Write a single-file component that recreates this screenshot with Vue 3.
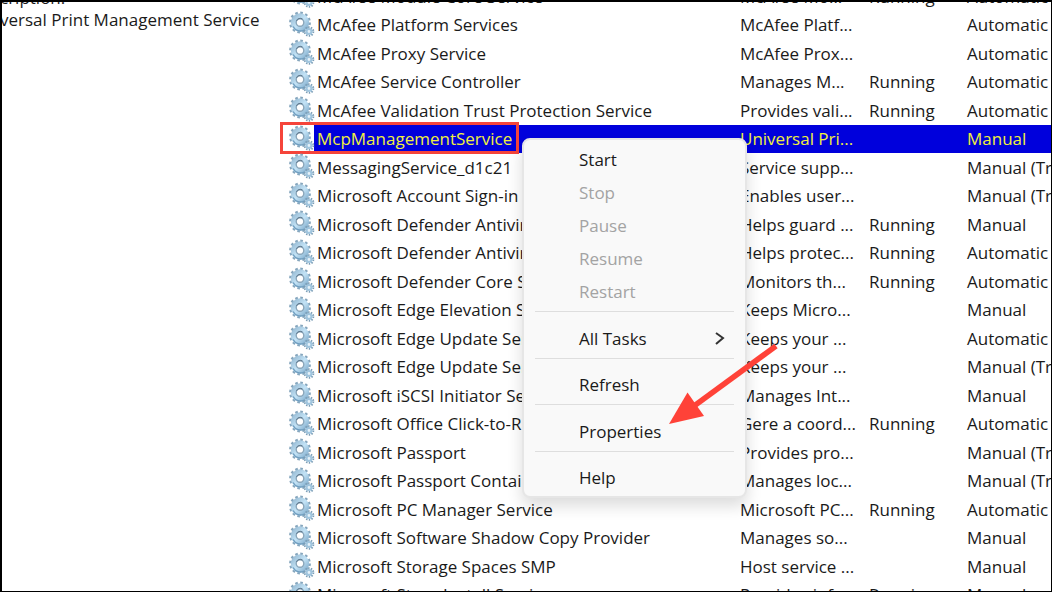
<template>
  <main class="window">
    <aside class="details">
      <p>cription:</p>
      <p>versal Print Management Service</p>
    </aside>

    <section class="services">
      <svg class="symbols" aria-hidden="true">
        <defs>
          <linearGradient id="steel" x1="0" y1="0" x2="1" y2="1">
            <stop offset="0" stop-color="#9dc0d8" />
            <stop offset="0.5" stop-color="#c3e3f6" />
            <stop offset="1" stop-color="#8ab4d2" />
          </linearGradient>
          <symbol id="gears" viewBox="0 0 26 26">
            <circle cx="11" cy="11.5" r="9.4" fill="none" stroke="#86a6bd" stroke-width="3" stroke-dasharray="2.5 2.42" />
            <circle cx="11" cy="11.5" r="6.3" fill="none" stroke="url(#steel)" stroke-width="5.8" />
            <path d="M4 15.5a8.5 8.5 0 0 0 11.5 3.5" fill="none" stroke="#6f9dbf" stroke-width="1.4" />
            <circle cx="11" cy="11.5" r="3.8" fill="#fff" stroke="#8aa6ba" stroke-width="1.4" />
            <path d="M7.5 10a4 4 0 0 1 6-2" fill="none" stroke="#5f788d" stroke-width="1" />
            <circle cx="20" cy="20.5" r="4.3" fill="none" stroke="#7b9db6" stroke-width="2" stroke-dasharray="1.4 1.3" />
            <circle cx="20" cy="20.5" r="2.5" fill="#e5f2fa" stroke="#a0c5de" stroke-width="2.2" />
          </symbol>
        </defs>
      </svg>

      <table>
        <colgroup>
          <col class="col-icon" />
          <col class="col-name" />
          <col class="col-description" />
          <col class="col-status" />
          <col />
        </colgroup>
        <tbody>
          <tr
            v-for="(service, index) in services"
            :key="index"
            :class="{ selected: index === selectedIndex }"
          >
            <td class="icon">
              <svg width="26" height="26" aria-hidden="true"><use href="#gears" /></svg>
              <span v-if="index === selectedIndex" class="marker"></span>
            </td>
            <td>{{ service[0] }}</td>
            <td>{{ service[1] }}</td>
            <td>{{ service[2] }}</td>
            <td>{{ service[3] }}</td>
          </tr>
        </tbody>
      </table>
    </section>

    <div class="menu" role="menu">
      <template v-for="(group, index) in menuGroups" :key="index">
        <hr v-if="index > 0" />
        <button
          v-for="item in group"
          :key="item.label"
          type="button"
          role="menuitem"
          :disabled="item.disabled"
        >
          {{ item.label }}
          <svg v-if="item.submenu" width="10" height="14" viewBox="0 0 10 14" aria-hidden="true">
            <path d="M1 1l7 5-7 6" fill="none" stroke="#333" stroke-width="2" />
          </svg>
        </button>
      </template>
    </div>

    <svg class="arrow" width="110" height="82" viewBox="0 0 110 82" aria-hidden="true">
      <path d="M108 2L26 62" stroke="#ff4238" stroke-width="5.5" />
      <path d="M1 80L19.5 48.5L36 72Z" fill="#ff4238" />
    </svg>
  </main>
</template>

<script setup>
import { ref } from 'vue';

const selectedIndex = ref(5);

const services = [
  ['McAfee Module Core Service', 'McAfee Mo...', 'Running', 'Automatic'],
  ['McAfee Platform Services', 'McAfee Platf...', '', 'Automatic'],
  ['McAfee Proxy Service', 'McAfee Prox...', '', 'Automatic'],
  ['McAfee Service Controller', 'Manages M...', 'Running', 'Automatic'],
  ['McAfee Validation Trust Protection Service', 'Provides vali...', 'Running', 'Automatic'],
  ['McpManagementService', 'Universal Pri...', '', 'Manual'],
  ['MessagingService_d1c21', 'Service supp...', '', 'Manual (Trigger)'],
  ['Microsoft Account Sign-in Assistant', 'Enables user...', '', 'Manual (Trigger)'],
  ['Microsoft Defender Antivirus Network', 'Helps guard ...', 'Running', 'Manual'],
  ['Microsoft Defender Antivirus Service', 'Helps protec...', 'Running', 'Automatic'],
  ['Microsoft Defender Core Service', 'Monitors th...', 'Running', 'Automatic'],
  ['Microsoft Edge Elevation Service', 'Keeps Micro...', '', 'Manual'],
  ['Microsoft Edge Update Service', 'Keeps your ...', '', 'Automatic'],
  ['Microsoft Edge Update Service', 'Keeps your ...', '', 'Manual (Trigger)'],
  ['Microsoft iSCSI Initiator Service', 'Manages Int...', '', 'Manual'],
  ['Microsoft Office Click-to-Run', 'Gere a coord...', 'Running', 'Automatic'],
  ['Microsoft Passport', 'Provides pro...', '', 'Manual (Trigger)'],
  ['Microsoft Passport Container', 'Manages loc...', '', 'Manual (Trigger)'],
  ['Microsoft PC Manager Service', 'Microsoft PC...', 'Running', 'Automatic'],
  ['Microsoft Software Shadow Copy Provider', 'Manages so...', '', 'Manual'],
  ['Microsoft Storage Spaces SMP', 'Host service ...', '', 'Manual'],
  ['Microsoft Store Install Service', 'Provides infr...', 'Running', 'Manual'],
];

const menuGroups = [
  [
    { label: 'Start' },
    { label: 'Stop', disabled: true },
    { label: 'Pause', disabled: true },
    { label: 'Resume', disabled: true },
    { label: 'Restart', disabled: true },
  ],
  [{ label: 'All Tasks', submenu: true }],
  [{ label: 'Refresh' }],
  [{ label: 'Properties' }],
  [{ label: 'Help' }],
];
</script>

<style>
body {
  margin: 0;
}
</style>

<style scoped>
.window {
  position: relative;
  display: flex;
  box-sizing: border-box;
  height: 100vh;
  overflow: hidden;
  border: solid #000;
  border-width: 2px 1px 1px 2px;
  background: #fff;
  color: #1a1a1a;
  font-family: 'Open Sans', 'Noto Sans', sans-serif;
  font-size: 17px;
}

.details {
  flex: 0 0 284px;
  overflow: hidden;
}

.details p {
  margin: 0 0 0 -2px;
  line-height: 22px;
  white-space: nowrap;
}

.details p:first-child {
  margin-top: -15px;
}

.services {
  flex: 1;
  min-width: 0;
  margin-top: -20px;
}

.symbols {
  position: absolute;
  width: 0;
  height: 0;
}

table {
  width: 100%;
  table-layout: fixed;
  border-collapse: collapse;
}

.col-icon {
  width: 28px;
}

.col-name {
  width: 423px;
}

.col-description {
  width: 129px;
}

.col-status {
  width: 98px;
}

tr {
  height: 29px;
}

tr:nth-child(even) {
  height: 28px;
}

td {
  padding: 0 0 0 3px;
  overflow: hidden;
  line-height: 28px;
  white-space: nowrap;
}

.icon {
  position: relative;
  overflow: visible;
  line-height: 0;
  vertical-align: top;
}

.selected td:not(.icon) {
  background: #0000dc;
  color: #f0f03c;
}

.marker {
  position: absolute;
  top: -3px;
  left: -6px;
  box-sizing: border-box;
  width: 239px;
  height: 32px;
  border: 3px solid #f5443a;
}

.menu {
  position: absolute;
  top: 136px;
  left: 520px;
  box-sizing: border-box;
  width: 225px;
  padding: 3px 0 2px;
  border: 2px solid #e6e6e6;
  border-radius: 8px;
  background: #f9f9f9;
  box-shadow: 0 8px 16px rgba(0, 0, 0, 0.14);
}

.menu button {
  display: flex;
  align-items: center;
  justify-content: space-between;
  width: 100%;
  height: 33px;
  padding: 0 20px 0 55px;
  border: 0;
  background: none;
  color: #1a1a1a;
  font: inherit;
}

.menu button:disabled {
  color: #a3a3a3;
}

.menu hr {
  height: 1px;
  margin: 3px 11px 10px;
  border: 0;
  background: #dedede;
}

.menu hr:nth-of-type(even) {
  margin-bottom: 9px;
}

.arrow {
  position: absolute;
  top: 342px;
  left: 666px;
}
</style>
